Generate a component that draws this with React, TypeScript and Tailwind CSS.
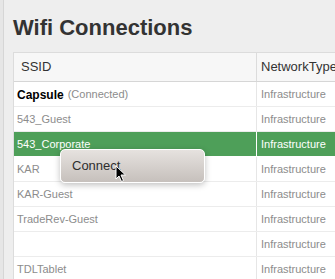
const rows = [
  { ssid: "Capsule", connected: true },
  { ssid: "543_Guest" },
  { ssid: "543_Corporate", selected: true },
  { ssid: "KAR" },
  { ssid: "KAR-Guest" },
  { ssid: "TradeRev-Guest" },
  { ssid: "" },
  { ssid: "TDLTablet" },
];

const App = () => {
  return (
    <div
      className="relative flex h-[279px] w-[335px] overflow-hidden bg-[#eeeeee]"
      style={{ fontFamily: '"Liberation Sans", Arial, sans-serif' }}
    >
      <div className="w-[4px] shrink-0 border-r border-[#d6d6d6] bg-[#e6e6e6]"></div>

      <div className="flex-1 pl-[9px]">
        <h1 className="pt-[16px] text-[22px] font-bold leading-[24px] text-[#333333]">
          Wifi Connections
        </h1>

        <div className="mt-[12px] w-[400px] border-t border-l border-[#dcdcdc] bg-white">
          {/* header */}
          <div className="flex h-[29px] border-b border-[#d6d6d6] bg-[#f7f7f7] text-[13px] text-[#333333]">
            <div className="flex w-[243px] items-center border-r border-[#dcdcdc] pl-[7px]">
              SSID
            </div>
            <div className="flex flex-1 items-center pl-[4px]">NetworkType</div>
          </div>

          {rows.map((r, i) => (
            <div
              key={i}
              className={
                r.selected
                  ? "flex h-[25px] border-b border-white bg-[#4e9f59] text-[11px] text-white"
                  : "flex h-[25px] border-b border-[#ececec] text-[11px] text-[#8c8c8c]"
              }
            >
              <div
                className={
                  r.selected
                    ? "flex w-[243px] items-center border-r border-white pl-[3px] pt-[1px]"
                    : "flex w-[243px] items-center border-r border-[#e6e6e6] pl-[3px] pt-[1px]"
                }
              >
                {r.connected ? (
                  <>
                    <span className="text-[12px] font-bold text-black">{r.ssid}</span>
                    <span className="ml-[4px]">(Connected)</span>
                  </>
                ) : (
                  r.ssid
                )}
              </div>
              <div className="flex flex-1 items-center pl-[4px] pt-[1px]">Infrastructure</div>
            </div>
          ))}
        </div>
      </div>

      {/* context menu */}
      <div className="absolute left-[60px] top-[149px] flex h-[34px] w-[145px] items-center rounded-[5px] border border-white bg-gradient-to-b from-[#e6e2df] to-[#c6c0bc] pl-[11px] text-[13px] text-[#2e2e2e] shadow-[0_2px_6px_rgba(0,0,0,0.25)]">
        Connect
      </div>

      {/* mouse pointer */}
      <svg
        className="absolute left-[115px] top-[165px]"
        width="12"
        height="18"
        viewBox="0 0 12 18"
      >
        <path
          d="M1 1 L1 14 L4 11 L6.5 16.5 L8.5 15.5 L6 10 L10.5 10 Z"
          fill="black"
          stroke="white"
          strokeWidth="1"
          strokeLinejoin="round"
        />
      </svg>
    </div>
  );
};

export default App;
